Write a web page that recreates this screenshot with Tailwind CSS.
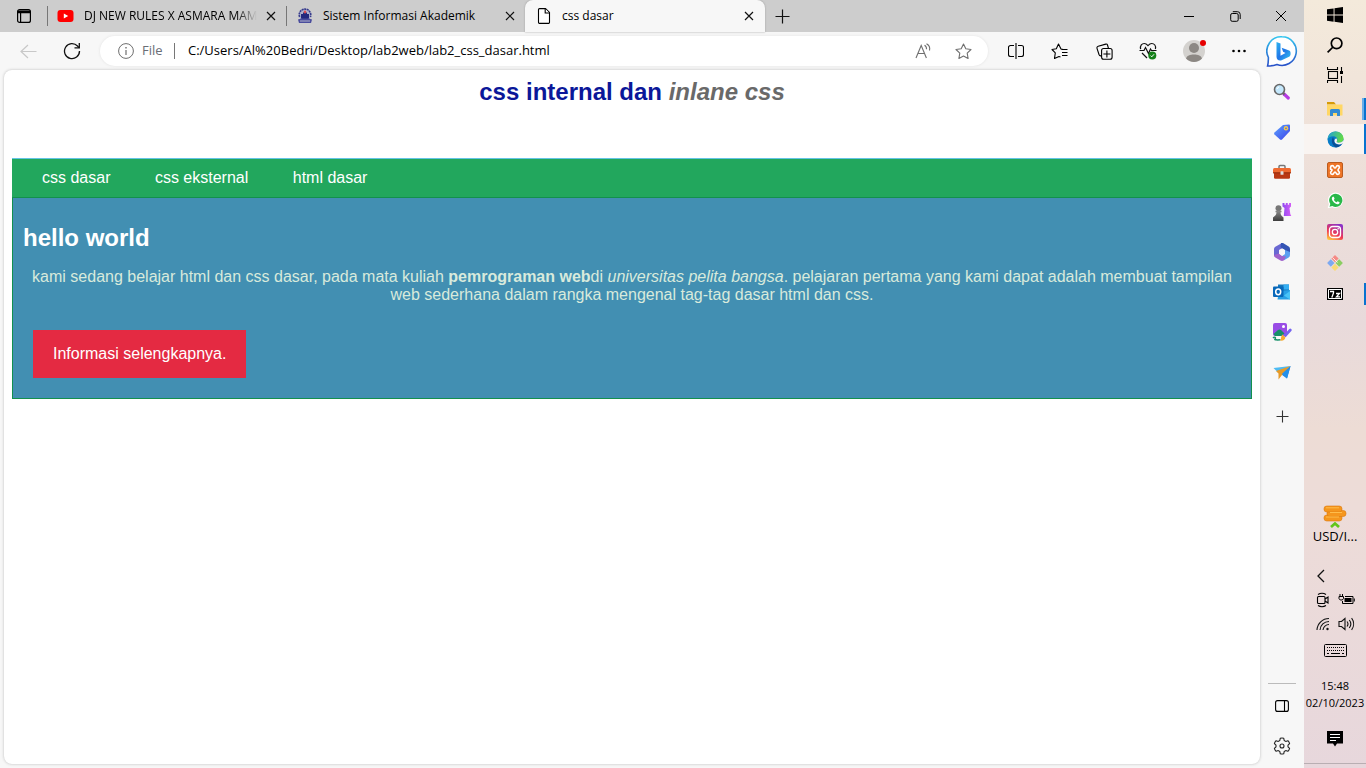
<!DOCTYPE html>
<html lang="id">
<head>
<meta charset="utf-8">
<title>css dasar</title>
<script src="https://cdn.jsdelivr.net/npm/@tailwindcss/browser@4"></script>
</head>
<body class="flex h-screen overflow-hidden bg-[#f7f7f7] font-['Open_Sans','Noto_Sans',sans-serif] text-xs text-black">

<div class="flex min-w-0 flex-1 flex-col">
  <!-- Tab strip -->
  <header class="flex h-8 shrink-0 items-stretch bg-[#cdcdcd]">
    <button aria-label="Tab actions" class="flex w-[47px] shrink-0 items-center justify-center">
      <svg width="16" height="16" viewBox="0 0 16 16" fill="none" stroke="#000" stroke-width="1.2"><rect x="1.6" y="1.6" width="12.8" height="12.8" rx="2"/><path d="M2 3.2h12M2 4.4h12" stroke-width="1.6"/><path d="M4.6 5v9"/></svg>
    </button>
    <div class="flex w-[239px] items-center border-0">
      <span class="h-5 w-px bg-[#777]"></span>
      <svg class="ml-[9px] shrink-0" width="17" height="16" viewBox="0 0 17 16"><rect x="0.5" y="2" width="16" height="12" rx="3" fill="#f00"/><path d="M6.8 5.4v5.2L11.2 8z" fill="#fff"/></svg>
      <a href="#" class="ml-[10px] min-w-0 flex-1 overflow-hidden whitespace-nowrap [mask-image:linear-gradient(to_right,#000_88%,transparent)]">DJ NEW RULES X ASMARA MAM</a>
      <button aria-label="Close tab" class="mr-[5px] ml-1 flex h-5 w-5 shrink-0 items-center justify-center"><svg width="10" height="10" viewBox="0 0 10 10" stroke="#111" stroke-width="1.2"><path d="M1 1l8 8M9 1L1 9"/></svg></button>
    </div>
    <div class="flex w-[239px] items-center">
      <span class="h-5 w-px bg-[#777]"></span>
      <svg class="ml-[10px] shrink-0" width="16" height="16" viewBox="0 0 16 16"><circle cx="8" cy="7" r="6.2" fill="#aeb2cc"/><path d="M2.6 9A5.8 5.8 0 1 1 13.400 9" fill="none" stroke="#383c8c" stroke-width="1.600" stroke-dasharray="2 .6"/><path d="M4 6h2V4.600h4V6h2v4l-1 2H5l-1-2z" fill="#24287e"/><path d="M1 11.500l3-1h8l3 1-1 3.500H2z" fill="#4a4d9d"/><path d="M3 13h10" stroke="#ddd" stroke-width=".7"/><path d="M8 2.600v3M6.800 4h2.400" stroke="#e04848" stroke-width="1.300"/></svg>
      <a href="#" class="ml-[10px] flex-1 whitespace-nowrap">Sistem Informasi Akademik</a>
      <button aria-label="Close tab" class="mr-[5px] flex h-5 w-5 items-center justify-center"><svg width="10" height="10" viewBox="0 0 10 10" stroke="#111" stroke-width="1.2"><path d="M1 1l8 8M9 1L1 9"/></svg></button>
    </div>
    <div class="flex w-[240px] items-center rounded-t-lg bg-[#f7f7f7] shadow-[0_0_2px_#999]">
      <svg class="ml-[11px] shrink-0" width="16" height="16" viewBox="0 0 16 16" fill="#fff" stroke="#000" stroke-width="1.1"><path d="M3.500.600H9.500L13.500 4.600V14.200a1.200 1.200 0 0 1-1.200 1.200H3.700a1.200 1.200 0 0 1-1.200-1.200V1.600a1 1 0 0 1 1-1z"/><path d="M9.200.800V5h4.200"/></svg>
      <a href="#" class="ml-[10px] flex-1">css dasar</a>
      <button aria-label="Close tab" class="mr-[6px] flex h-5 w-5 items-center justify-center"><svg width="10" height="10" viewBox="0 0 10 10" stroke="#111" stroke-width="1.2"><path d="M1 1l8 8M9 1L1 9"/></svg></button>
    </div>
    <button aria-label="New tab" class="flex w-[34px] items-center justify-center"><svg width="15" height="15" viewBox="0 0 15 15" stroke="#111" stroke-width="1.200"><path d="M7.500.5v14M.5 7.500h14"/></svg></button>
    <div class="ml-auto flex">
      <button aria-label="Minimize" class="flex w-[46px] items-center justify-center"><svg width="10" height="10" viewBox="0 0 10 10" stroke="#000"><path d="M0 5.500h10"/></svg></button>
      <button aria-label="Restore" class="flex w-[46px] items-center justify-center"><svg width="11" height="11" viewBox="0 0 11 11" fill="none" stroke="#000"><rect x=".7" y="2.500" width="7.500" height="7.800" rx="1.500"/><path d="M2.800.700H7.500a2.700 2.700 0 0 1 2.700 2.700V8"/></svg></button>
      <button aria-label="Close window" class="flex w-[46px] items-center justify-center"><svg width="12" height="12" viewBox="0 0 12 12" stroke="#000"><path d="M1 1l10 10M11 1L1 11"/></svg></button>
    </div>
  </header>

  <div class="flex min-h-0 flex-1">
    <div class="flex min-w-0 flex-1 flex-col">
      <!-- Toolbar -->
      <div class="flex h-[38px] shrink-0 items-center">
        <button aria-label="Back" class="flex w-14 items-center justify-center"><svg width="17" height="15" viewBox="0 0 17 15" fill="none" stroke="#c8c8c8" stroke-width="1.200"><path d="M16.500 7.500H1M8 1L1 7.500 8 14"/></svg></button>
        <button aria-label="Refresh" class="flex w-8 items-center justify-center"><svg width="18" height="18" viewBox="0 0 18 18" fill="none" stroke="#111" stroke-width="1.300"><path d="M16.500 9A7.500 7.500 0 1 1 14.500 4L16 5.600"/><path d="M16.300 1v4.800h-4.800"/></svg></button>
        <div class="ml-3 mr-[6px] flex h-[30px] flex-1 items-center rounded-full bg-white shadow-[0_0_3px_#e2e2e2]">
          <svg class="ml-[18px]" width="16" height="16" viewBox="0 0 16 16" fill="none" stroke="#6e6e6e" stroke-width="1"><circle cx="8" cy="8" r="7.400"/><path d="M8 7v5" stroke-width="1.200"/><path d="M8 4v1.500" stroke-width="1.400"/></svg>
          <label for="address" class="ml-2 w-[23px] text-[13px] text-[#6a6e76]">File</label>
          <span class="ml-[9px] h-4 w-px bg-[#777]"></span>
          <input id="address" type="text" value="C:/Users/Al%20Bedri/Desktop/lab2web/lab2_css_dasar.html" class="ml-[13px] min-w-0 flex-1 bg-transparent text-[13px] outline-none">
          <button aria-label="Read aloud" class="flex w-10 items-center justify-center"><svg width="17" height="16" viewBox="0 0 17 16" fill="none" stroke="#707070" stroke-width="1.100"><path d="M1 15L6.200 2.500 11.400 15M2.800 10.500h6.800M9.500 2.200a4 4 0 0 1 2 4M11.500.800a6 6 0 0 1 3 6.700"/></svg></button>
          <button aria-label="Favorite" class="mr-[5px] flex w-10 items-center justify-center"><svg width="17" height="17" viewBox="0 0 17 17" fill="none" stroke="#707070" stroke-width="1.100" stroke-linejoin="round"><path d="M8.500 1l2.300 4.800 5.200.700-3.800 3.700.9 5.300-4.600-2.500-4.600 2.500.9-5.300L1 6.500l5.200-.7z"/></svg></button>
        </div>
        <button aria-label="Split screen" class="flex w-11 items-center justify-center"><svg width="16" height="16" viewBox="0 0 16 16" fill="none" stroke="#000" stroke-width="1.100"><path d="M8 0v16M6 2.500H2.500a2 2 0 0 0-2 2v7a2 2 0 0 0 2 2H6M10 2.500h3.500a2 2 0 0 1 2 2v7a2 2 0 0 1-2 2H10"/></svg></button>
        <button aria-label="Favorites" class="flex w-11 items-center justify-center"><svg width="18" height="17" viewBox="0 0 18 17" fill="none" stroke="#000" stroke-width="1.100" stroke-linejoin="round"><path d="M10.500 6.500H16.500M11 9.500h5.500M11 12.500h5.500M12.200 6.500L10 6 7.500 1 5.300 5.700 1 6.500l3.300 3.400L3.500 15.500 8 13.500 9.500 14"/></svg></button>
        <button aria-label="Collections" class="flex w-11 items-center justify-center"><svg width="17" height="17" viewBox="0 0 17 17" fill="none" stroke="#000" stroke-width="1.100"><rect x="5.600" y="5.500" width="10.500" height="10.800" rx="2"/><path d="M10.900 7.500v7M7.400 11h7M12.500 5.500L11.500 2a1.400 1.400 0 0 0-1.700-.9L2.200 3.200A1.700 1.700 0 0 0 1 5.300l2 6.200a2 2 0 0 0 2.500 1.200"/></svg></button>
        <button aria-label="Browser essentials" class="flex w-11 items-center justify-center"><svg width="18" height="18" viewBox="0 0 18 18" fill="none" stroke="#111" stroke-width="1.200"><path d="M1.600 7.200C.8 3.500 3 1.500 5.300 1.500 7 1.500 8 2.500 9 3.600c1-1.100 2-2.100 3.700-2.100 2.500 0 4.600 2.200 3.700 5.500M.5 8.500H5l1.500-3 3 6L11.500 7l1 1.500h5M3 11l5 5"/><circle cx="13.300" cy="13.500" r="4" fill="#138018" stroke="none"/><path d="M11.600 13.700l1.200 1.100 2.200-2.500" stroke="#fff" stroke-width="1"/></svg></button>
        <button aria-label="Profile" class="flex w-12 items-center justify-center"><svg width="24" height="24" viewBox="0 0 24 24"><circle cx="12" cy="12" r="11" fill="#d4d2cf"/><circle cx="12" cy="9" r="5" fill="#8c8884"/><path d="M4 19.500C5 14 19 14 20 19.500a11 11 0 0 1-16 0z" fill="#8c8884"/><circle cx="21" cy="4" r="3" fill="#e60000"/></svg></button>
        <button aria-label="Settings and more" class="flex w-[42px] items-center justify-center"><svg width="16" height="4" viewBox="0 0 16 4"><circle cx="2.500" cy="2" r="1.300"/><circle cx="8" cy="2" r="1.300"/><circle cx="13.500" cy="2" r="1.300"/></svg></button>
      </div>

      <!-- Web page -->
      <main class="mb-1 ml-1 flex-1 rounded-lg bg-white px-2 font-['Liberation_Sans',Arial,sans-serif] text-base shadow-[0_0_3px_#bbb]">
        <h1 class="pt-2 text-center text-2xl leading-7 font-bold text-[#0b1799]">css internal dan <i class="text-[#696969]">inlane css</i></h1>
        <nav class="mt-[52px] border-t border-[#62c4e4] bg-[#22a75d] py-[7px] pl-[10px] leading-6 text-white">
          <a href="#" class="px-5">css dasar</a>
          <a href="#" class="px-5">css eksternal</a>
          <a href="#" class="px-5">html dasar</a>
        </nav>
        <section class="border border-[#12904d] bg-[#428fb2] px-[10px] pt-[26px] pb-5">
          <h2 class="text-2xl leading-7 font-bold text-white">hello world</h2>
          <p class="mt-4 px-2 text-center leading-[18px] text-[#d8eadc]">kami sedang belajar html dan css dasar, pada mata kuliah <b>pemrograman web</b>di <i>universitas pelita bangsa</i>. pelajaran pertama yang kami dapat adalah membuat tampilan web sederhana dalam rangka mengenal tag-tag dasar html dan css.</p>
          <a href="#" class="mt-[26px] ml-[10px] inline-block bg-[#e42a42] px-5 py-3 align-top leading-6 text-white">Informasi selengkapnya.</a>
        </section>
      </main>
    </div>

    <!-- Browser sidebar -->
    <aside class="flex w-11 shrink-0 flex-col items-stretch">
      <button aria-label="Bing" class="flex h-10 items-center justify-center"><svg width="32" height="34" viewBox="0 0 32 34"><defs><linearGradient id="ring" x2="0" y2="1"><stop stop-color="#32c5ef"/><stop offset="1" stop-color="#2850c8"/></linearGradient><linearGradient id="bee" x2="1" y2="1"><stop stop-color="#2bb4f0"/><stop offset=".5" stop-color="#2176e8"/><stop offset="1" stop-color="#35c5ee"/></linearGradient></defs><path d="M16 1.800A14.300 14.300 0 1 1 11 29.500C8 30.500 5 31 1.600 31c.8-3 .7-5 .8-8.500A14.300 14.300 0 0 1 16 1.800z" fill="#fff" stroke="url(#ring)" stroke-width="1.600"/><path d="M10.500 7l4 1.500v12.200l5-2.800-2.400-1.200-1.500-3.900 7.500 2.700c1.300.5 1.500 1.800 1.500 3.200 0 1.500-.5 2.300-1.500 3l-7.500 3.600c-3 1-5.100-1-5.100-3.500z" fill="url(#bee)"/></svg></button>
      <button aria-label="Search" class="flex h-10 items-center justify-center"><svg width="18" height="18" viewBox="0 0 18 18"><path d="M11 11l4.300 4" stroke="#b63be4" stroke-width="3.200" stroke-linecap="round"/><path d="M9.500 9.500l2 2" stroke="#666" stroke-width="2"/><circle cx="6.500" cy="6.500" r="5" fill="#c4e8fc" stroke="#686868" stroke-width="1.600"/><path d="M4 6a3 3 0 0 1 2-2" stroke="#fff" fill="none"/></svg></button>
      <button aria-label="Shopping" class="flex h-10 items-center justify-center"><svg width="18" height="18" viewBox="0 0 18 18"><defs><linearGradient id="tag" x2="1" y2="1"><stop stop-color="#5da6ff"/><stop offset="1" stop-color="#3b40e8"/></linearGradient></defs><path d="M10 2L16 1.500a1 1 0 0 1 1 1V8l-8 8.500a1.500 1.500 0 0 1-2 0L1.500 11.500a1.500 1.500 0 0 1 0-2z" fill="url(#tag)"/><circle cx="13" cy="5.300" r="2.200" fill="#f8ce45"/><circle cx="13" cy="5.300" r=".9" fill="#5264ef"/></svg></button>
      <button aria-label="Tools" class="flex h-10 items-center justify-center"><svg width="18" height="16" viewBox="0 0 18 16"><path d="M6 4V2.500A1 1 0 0 1 7 1.500h4a1 1 0 0 1 1 1V4" fill="none" stroke="#777" stroke-width="1.500"/><rect x="0" y="4" width="18" height="5.500" rx="1.500" fill="#ef6a31"/><path d="M1 9h16v4.500a1.300 1.300 0 0 1-1.300 1.300H2.300A1.300 1.300 0 0 1 1 13.500z" fill="#b93814"/><path d="M0 8.800h18" stroke="#8f280c"/><rect x="7.500" y="7.300" width="3" height="3.500" rx=".6" fill="#ddd"/></svg></button>
      <button aria-label="Games" class="flex h-10 items-center justify-center"><svg width="20" height="20" viewBox="0 0 20 20"><defs><linearGradient id="rook"><stop stop-color="#8f4bf0"/><stop offset="1" stop-color="#d55cf8"/></linearGradient><linearGradient id="pawn" x2="0" y2="1"><stop stop-color="#8a8a8a"/><stop offset="1" stop-color="#3c3c3c"/></linearGradient></defs><path d="M10.500 1h2v1.700h1.300V1h2v1.700h1.300V1h1.900v3.500l-1.500 1.500.8 6 1 2h-7.500l.7-8-2-1.500z" fill="url(#rook)"/><circle cx="6.500" cy="6.200" r="3" fill="#777"/><path d="M3.500 8.800h6v1.500H8.500c.1 2.500.8 3.700 3 5.200v3.500H1v-3.500c2.200-1.500 3.400-2.700 3.500-5.200h-1z" fill="url(#pawn)"/></svg></button>
      <button aria-label="Microsoft 365" class="flex h-10 items-center justify-center"><svg width="18" height="18" viewBox="0 0 18 18"><path d="M9 0l2.500 4.500L6 7v4L1 13.500V6q0-1.600 1.300-2.300z" fill="#6a68d2"/><path d="M8 0h2l5.700 3.500Q17 4.300 17 6v6l-5-1V7L7.500 4.200z" fill="#3454b4"/><path d="M17 10v2q0 1.600-1.300 2.400L11 17.300 7.800 14l4.200-3V7l5 2z" fill="#5a9ff0"/><path d="M1 12l5-1.500L9 13l4 .5-2 3.800q-2 1.200-4 0l-4.700-2.900Q1 13.600 1 12z" fill="#a063cc"/><path d="M9 5.500l3 1.800v3.400l-3 1.800-3-1.800V7.300z" fill="#f7f7f7"/></svg></button>
      <button aria-label="Outlook" class="flex h-10 items-center justify-center"><svg width="18" height="18" viewBox="0 0 18 18"><path d="M5 1.500h11v14H5z" fill="#1678bd"/><path d="M10.500 1.500H16v5h-5.500z" fill="#34aef2"/><path d="M6 8l11-1v9.500H4.500z" fill="#28a0e6"/><path d="M11 12.500L17 8v8.500z" fill="#49c4f7"/><rect x="0" y="3.500" width="10.500" height="10.500" rx="1" fill="#0868ba"/><ellipse cx="5.200" cy="8.800" rx="2.500" ry="2.900" fill="none" stroke="#fff" stroke-width="1.500"/></svg></button>
      <button aria-label="Image creator" class="flex h-10 items-center justify-center"><svg width="20" height="20" viewBox="0 0 20 20"><rect x="1" y="1" width="14" height="13" rx="2" fill="#994ce5"/><circle cx="11.500" cy="4.500" r="1.500" fill="#fff"/><path d="M1.500 12L6 8c1-.8 2-.8 3 0l3.500 3.500-3 2.500H3z" fill="#159068"/><path d="M1 16c2-2 3 0 2 1s2 1 5.500.8" fill="none" stroke="#159068" stroke-width="1.500"/><path d="M18.300 8l-5 5.500" stroke="#7463f0" stroke-width="2.700" stroke-linecap="round"/><path d="M10.500 12.500l3 3c-1 3-3 3.500-5.500 3 1.500-1 .5-4 2.500-6z" fill="#f6ab30"/></svg></button>
      <button aria-label="Drop" class="flex h-10 items-center justify-center"><svg width="18" height="15" viewBox="0 0 18 15"><path d="M.5 3L17.500 1 5.500 8z" fill="#4dbbf3"/><path d="M8.500 9.500L17.500 1 14 13.500z" fill="#1b7fe0"/><path d="M3 6L17.500 1 9 10l-3.500 4.500L5.500 8.500z" fill="#e89a26"/><path d="M9 8.800L17.500 1l-3.500 12.500z" fill="#2390ea"/></svg></button>
      <button aria-label="Customize" class="flex h-12 items-center justify-center"><svg width="13" height="13" viewBox="0 0 13 13" stroke="#333" stroke-width="1.100"><path d="M6.500.5v12M.5 6.500h12"/></svg></button>
      <div class="mx-2 mt-auto mb-[2px] h-px bg-[#bbb]"></div>
      <button aria-label="Hide sidebar" class="flex h-10 items-center justify-center"><svg width="14" height="12" viewBox="0 0 14 12" fill="none" stroke="#000" stroke-width="1.100"><rect x=".6" y=".6" width="12.800" height="10.800" rx="2"/><path d="M9.500.6v10.800"/></svg></button>
      <button aria-label="Settings" class="mb-[2px] flex h-10 items-center justify-center"><svg width="18" height="18" viewBox="0 0 18 18" fill="none" stroke="#222" stroke-width="1.100" stroke-linejoin="round"><path d="M7.300 1.200q1.700-.5 3.400 0l.5 2.300 1.500.9 2.200-.7q1.300 1.300 1.700 2.900L15 8.200v1.600l1.600 1.600q-.4 1.700-1.700 2.900l-2.200-.7-1.500.9-.5 2.300q-1.700.5-3.400 0l-.5-2.300-1.500-.9-2.200.7q-1.300-1.200-1.700-2.900L3 9.800V8.200L1.400 6.600q.4-1.600 1.700-2.900l2.200.7 1.500-.9z"/><circle cx="9" cy="9" r="2"/></svg></button>
    </aside>
  </div>
</div>

<!-- Desktop taskbar -->
<aside class="flex w-[62px] shrink-0 flex-col items-stretch bg-[linear-gradient(#f4eadb,#eee0d9_20%,#e8dadb_42%,#eddcd5_56%,#eddcd8_66%,#e7d7dc)]">
  <button aria-label="Start" class="flex h-[30px] items-center justify-center"><svg width="16" height="16" viewBox="0 0 16 16"><path d="M0 2.300L6.600 1.400V7.500H0zM7.500 1.200L16 0v7.500H7.500zM0 8.500h6.600v6.200L0 13.800zM7.500 8.500H16V16l-8.500-1.200z"/></svg></button>
  <button aria-label="Search" class="flex h-[30px] items-center justify-center"><svg width="16" height="16" viewBox="0 0 16 16" fill="none" stroke="#000" stroke-width="1.700"><circle cx="9.600" cy="6.300" r="5.300"/><path d="M6 10L.6 15.400"/></svg></button>
  <button aria-label="Task view" class="mb-[3px] flex h-[30px] items-center justify-center"><svg width="16" height="16" viewBox="0 0 16 16" fill="none" stroke="#000" stroke-width="1.100"><path d="M.5 0v2.500h10V0M.5 16v-2.500h10V16M14.500 0v4M14.500 9v7"/><rect x="1.500" y="4.500" width="9" height="7"/><path d="M13 4h3v3h-3z" fill="#000" stroke="none"/></svg></button>
  <button aria-label="File Explorer" class="flex h-[31px] items-center justify-center bg-[linear-gradient(to_right,#69aee8_50%,#0873d0_50%)] bg-[length:4px_22px] bg-[position:right_center] bg-no-repeat"><svg width="16" height="14" viewBox="0 0 16 14"><path d="M0 0h7l2 2.500H0z" fill="#d69b08"/><path d="M0 2.500h15.500v11H0z" fill="#ffd765"/><path d="M3 14V8.500a1.500 1.500 0 0 1 1.500-1.500h7A1.500 1.500 0 0 1 13 8.500V14h-3v-3H6v3z" fill="#3389d2"/></svg></button>
  <button aria-label="Microsoft Edge" class="flex h-[30px] items-center justify-center bg-[#f9f4f1] bg-[linear-gradient(#0873d0,#0873d0)] bg-[length:2px_30px] bg-[position:right_center] bg-no-repeat"><svg width="17" height="17" viewBox="0 0 17 17"><defs><linearGradient id="edge" x2="1" y2=".3"><stop stop-color="#1e9ee0"/><stop offset="1" stop-color="#62d948"/></linearGradient></defs><circle cx="8.500" cy="8.500" r="8" fill="#087cc8"/><path d="M.5 8.500C1 3.500 4.500.5 8.500.5c5 0 8 3.500 8 7 0 3-2.500 4.200-5 4.200-1.500 0-2.300-.6-1.800-1.200C11.500 8 9.500 5.300 6 5.300 3.500 5.300 1.500 6.500.5 8.500z" fill="url(#edge)"/><path d="M6 6c-2 3-1.500 8 3 10.500a8 8 0 0 0 6-3.900c-4 2-8.500.5-7.700-3.100z" fill="#0b4f96"/><path d="M7.500 9.300C7.800 8.300 8.600 7.600 9.600 7.600q1 1.500.1 2.900c-.4.700.5 1.200 1.800 1.200 1.800 0 3.500-.6 5-2.200v2.200L15 12.800c-4 1.600-7.800-.2-7.500-3.500z" fill="#f9f4f1"/></svg></button>
  <button aria-label="XAMPP" class="flex h-[31px] items-center justify-center"><svg width="16" height="16" viewBox="0 0 16 16" fill="none"><rect x=".5" y=".5" width="15" height="15" rx="1.500" fill="#ee7527" stroke="#bb5c20"/><path d="M3.600 7V5.200A1.700 1.700 0 0 1 5.300 3.600C7.400 3.600 6.500 6 8 6s.6-2.400 2.700-2.400a1.700 1.700 0 0 1 1.700 1.600c0 1.500-1.400 1.600-1.400 2.800s1.400 1.300 1.400 2.800a1.700 1.700 0 0 1-1.700 1.600C8.600 12.400 9.500 10 8 10s-.6 2.400-2.700 2.400a1.700 1.700 0 0 1-1.700-1.600C3.600 9.300 5 9.200 5 8S3.600 7.800 3.600 7z" stroke="#fff" stroke-width="1.600" stroke-linejoin="round"/></svg></button>
  <button aria-label="WhatsApp" class="flex h-[31px] items-center justify-center"><svg width="17" height="17" viewBox="0 0 17 17"><path d="M8.700.5a7.700 7.700 0 1 1-3.500 14.700L.7 16.300l1.200-4.300A7.800 7.800 0 0 1 8.700.5z" fill="#fff"/><path d="M8.700 1.700a6.600 6.600 0 1 1-3.400 12.200L2.500 14.700l.8-2.700A6.600 6.600 0 0 1 8.700 1.700z" fill="#29b849"/><path d="M5.800 4.700h1l.8 2-.7 1c.7 1.400 1.400 2 2.800 2.600l.9-1 2 1c0 1.400-1 2-2.200 2C8 12 5 9 4.800 6.500c0-.9.400-1.400 1-1.800z" fill="#fff"/></svg></button>
  <button aria-label="Instagram" class="flex h-[31px] items-center justify-center"><svg width="16" height="16" viewBox="0 0 16 16"><defs><linearGradient id="insta" x1=".2" y1="1" x2=".7" y2="0"><stop stop-color="#ffc83d"/><stop offset=".4" stop-color="#f23852"/><stop offset="1" stop-color="#8b33c8"/></linearGradient></defs><rect width="16" height="16" rx="2" fill="url(#insta)"/><g fill="none" stroke="#fff" stroke-width="1.300"><rect x="2.500" y="2.500" width="11" height="11" rx="3"/><circle cx="8" cy="8" r="2.700"/></g><circle cx="11.200" cy="4.800" r=".8" fill="#fff"/></svg></button>
  <button aria-label="Git" class="flex h-[31px] items-center justify-center"><svg width="16" height="16" viewBox="0 0 16 16"><path d="M8 0l3.600 3.600L8 7.200 4.400 3.600z" fill="#f58a85"/><path d="M3.800 4.300l3.700 3.700-3.700 3.700L.1 8z" fill="#7da9f0"/><path d="M12.200 4.300L15.900 8l-3.700 3.700L8.500 8z" fill="#8bce62"/><path d="M8 8.800l3.600 3.600L8 16l-3.600-3.600z" fill="#fadb75"/><path d="M5.500 2.500l5 5" stroke="#fff" stroke-width=".8"/></svg></button>
  <button aria-label="7-Zip" class="flex h-[31px] items-center justify-center bg-[linear-gradient(#0873d0,#0873d0)] bg-[length:2px_22px] bg-[position:right_center] bg-no-repeat"><svg width="16" height="12" viewBox="0 0 16 12" fill="none"><path d="M0 0h16v12H0z" fill="#000"/><path d="M1.500 1.500h13v9h-13z" fill="#000" stroke="#fff"/><path d="M3 3.500h3.500v1.500L4.800 9.500M9 5.500H12.500L9.500 8.800H13" stroke="#fff" stroke-width="1.300"/></svg></button>

  <div class="mt-auto flex flex-col items-center">
    <button class="flex flex-col items-center text-[13px] leading-4"><svg width="24" height="23" viewBox="0 0 24 23"><g fill="#f5961d" stroke="#dc7b10" stroke-width=".6"><rect x="1" y="10" width="18" height="6" rx="2.700"/><rect x="4" y="5.500" width="19" height="6" rx="2.700"/><rect x="1" y="1" width="18" height="6" rx="2.700"/></g><path d="M3 2.800h13M7 7.500h12M3 12h13" stroke="#ffbd4c"/><path d="M8 22l4-3.500 4 3.500" fill="none" stroke="#62c51a" stroke-width="2.700"/></svg>USD/I...</button>
    <button aria-label="Show hidden icons" class="mt-6 mr-7 flex h-4 items-center"><svg width="8" height="14" viewBox="0 0 8 14" fill="none" stroke="#111" stroke-width="1.300"><path d="M7 1L1 7l6 6"/></svg></button>
    <div class="mt-2 flex h-4 items-center gap-2">
      <button aria-label="Meet now"><svg width="14" height="16" viewBox="0 0 14 16" fill="none" stroke="#000" stroke-width="1.100"><rect x="1.500" y="4.500" width="7.500" height="7" rx="1"/><path d="M9 7l3-2v6L9 9M2 2.500q4-2.500 8 0M2 13.500q4 2.500 8 0"/></svg></button>
      <button aria-label="Battery"><svg width="17" height="14" viewBox="0 0 17 14" fill="none" stroke="#000" stroke-width="1"><path d="M7 3.500h8v7H4.500V8M16.300 5.500v3M2 1v2M4.500 1v2M1 3.500h4.500v2L4.300 7H2.200L1 5.500z"/><path d="M6.500 5h7v4h-7z" fill="#000" stroke="none"/></svg></button>
    </div>
    <div class="mt-2 flex h-4 items-center gap-2">
      <button aria-label="Wi-Fi"><svg width="14" height="14" viewBox="0 0 14 14" fill="none" stroke="#111" stroke-width="1.100"><path d="M1 13A12 12 0 0 1 13 1.500M4 13a9 9 0 0 1 9-8.500M7 13a6 6 0 0 1 6-5.500"/><circle cx="11.500" cy="12" r="1.200" fill="#111" stroke="none"/></svg></button>
      <button aria-label="Volume"><svg width="17" height="14" viewBox="0 0 17 14" fill="none" stroke="#111" stroke-width="1.100"><path d="M1 4.500h2.500L7 1.500v11L3.500 9.500H1zM9 4.500a4 4 0 0 1 0 5M11.300 3a6.500 6.500 0 0 1 0 8M13.600 1.200a9.500 9.500 0 0 1 0 11.600"/></svg></button>
    </div>
    <button aria-label="Touch keyboard" class="mt-3"><svg width="23" height="13" viewBox="0 0 23 13" fill="none" stroke="#000"><rect x=".5" y=".5" width="22" height="12" rx="1"/><path d="M3 3.500h17M3 6.500h17" stroke-dasharray="1 1"/><path d="M3 9.500h2M7 9.500h9M18 9.500h2"/></svg></button>
    <button class="mt-5 text-center text-[11px] leading-[17px] whitespace-nowrap">15:48<br>02/10/2023</button>
    <button aria-label="Notifications" class="mt-5 mb-4"><svg width="16" height="16" viewBox="0 0 16 16"><path d="M0 0h16v12.500H10L8 15.500 6 12.500H0z"/><path d="M3 3.500h10M3 6.500h10M3 9.500h6" stroke="#fff" stroke-width="1.100"/></svg></button>
    <div class="mb-1 h-px w-full bg-[#b9aeb2]"></div>
  </div>
</aside>
</body>
</html>
